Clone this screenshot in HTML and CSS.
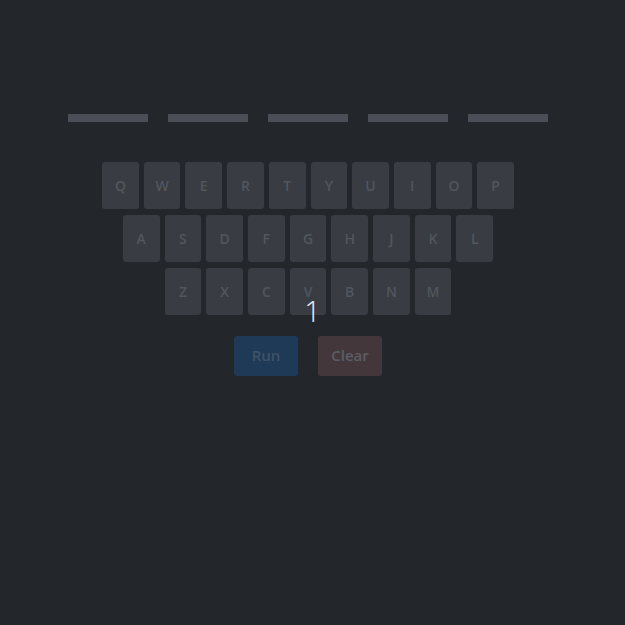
FILE: index.html
```html
<!DOCTYPE html>
<html>
<head>
<meta charset="utf-8">
<link rel="stylesheet" href="styles.css">
</head>
<body>
<div class="app">
  <div class="slots">
    <div class="slot"></div><div class="slot"></div><div class="slot"></div><div class="slot"></div><div class="slot"></div>
  </div>
  <div class="keyboard">
    <div class="row">
      <div class="key">Q</div><div class="key">W</div><div class="key">E</div><div class="key">R</div><div class="key">T</div><div class="key">Y</div><div class="key">U</div><div class="key">I</div><div class="key">O</div><div class="key">P</div>
    </div>
    <div class="row">
      <div class="key">A</div><div class="key">S</div><div class="key">D</div><div class="key">F</div><div class="key">G</div><div class="key">H</div><div class="key">J</div><div class="key">K</div><div class="key">L</div>
    </div>
    <div class="row">
      <div class="key">Z</div><div class="key">X</div><div class="key">C</div><div class="key">V</div><div class="key">B</div><div class="key">N</div><div class="key">M</div>
    </div>
  </div>
  <div class="actions">
    <button class="btn btn-run">Run</button>
    <button class="btn btn-clear">Clear</button>
  </div>
</div>
<div class="counter">1</div>
</body>
</html>
```
FILE: styles.css
```css
html, body {
  margin: 0;
  padding: 0;
  background: #23262b;
  height: 100%;
}
body {
  font-family: "Open Sans", "DejaVu Sans", sans-serif;
}
.app {
  width: 616px;
  padding-top: 114px;
  display: flex;
  flex-direction: column;
  align-items: center;
}
.slots {
  display: flex;
  gap: 20px;
}
.slot {
  width: 80px;
  height: 8px;
  background: #4a4e56;
}
.keyboard {
  margin-top: 40px;
  display: flex;
  flex-direction: column;
  align-items: center;
  gap: 6px;
}
.row {
  display: flex;
  gap: 5px;
}
.key {
  width: 36.7px;
  height: 47px;
  background: #393c43;
  border-radius: 3px;
  color: #52565d;
  font-size: 14px;
  font-weight: 600;
  display: flex;
  align-items: center;
  justify-content: center;
}
.actions {
  margin-top: 21px;
  display: flex;
  gap: 20px;
}
.btn {
  width: 64px;
  height: 40px;
  border: none;
  border-radius: 3px;
  font-family: "Open Sans", "DejaVu Sans", sans-serif;
  font-size: 15px;
  font-weight: 600;
  padding: 0 0 2px;
}
.btn-run {
  background: #1f3a57;
  color: #3f5266;
}
.btn-clear {
  background: #44373b;
  color: #5a5e66;
}
.counter {
  position: absolute;
  left: 0;
  width: 625px;
  top: 293px;
  text-align: center;
  color: #eceff2;
  font-size: 29px;
  font-weight: 300;
  line-height: 36px;
}
```
